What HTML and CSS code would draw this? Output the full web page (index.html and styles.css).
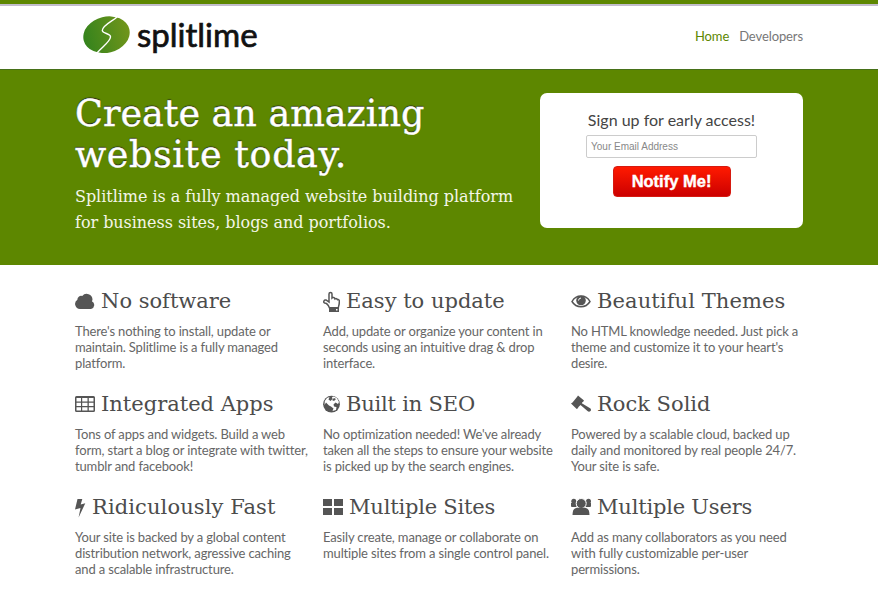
FILE: index.html
```html
<!DOCTYPE html>
<html lang="en">
<head>
    <meta charset="UTF-8">
    <meta name="viewport" content="width=device-width, initial-scale=1.0">
    <title>Splitlime</title>
    <link rel="stylesheet" href="styles.css">
</head>
<body>
    <header class="header">
        <div class="container header-inner">
            <a class="logo" href="#">
                <svg class="logo-mark" width="48" height="38" viewBox="0 0 48 38">
                    <defs>
                        <linearGradient id="lime" x1="0" y1="0" x2="1" y2="0">
                            <stop offset="0" stop-color="#34831d"/>
                            <stop offset="1" stop-color="#71951a"/>
                        </linearGradient>
                    </defs>
                    <ellipse cx="23.500" cy="18.700" rx="23.500" ry="18" transform="rotate(-14 23.500 18.700)" fill="url(#lime)"/>
                    <path d="M34 1C30 5 19.500 9 19.300 14.500C19.500 18 28 17 27.500 21C27 26 19 31 14 37" fill="none" stroke="#fff" stroke-width="1.400"/>
                </svg>
                <span class="logo-text">splitlime</span>
            </a>
            <nav class="nav">
                <a class="active" href="#">Home</a>
                <a href="#">Developers</a>
            </nav>
        </div>
    </header>

    <section class="hero">
        <div class="container hero-inner">
            <div class="intro">
                <h1>Create an amazing<br><span class="h1-second">website today.</span></h1>
                <p class="tagline">Splitlime is a fully managed website building platform<br>for business sites, blogs and portfolios.</p>
            </div>
            <form class="signup">
                <label for="email">Sign up for early access!</label>
                <input type="email" id="email" placeholder="Your Email Address">
                <button type="button">Notify Me!</button>
            </form>
        </div>
    </section>

    <main class="container features">
        <div class="feature">
            <h3>
                <svg width="20" height="22" viewBox="0 0 20 22"><path d="M5 19a5 5 0 0 1-2.600-9.200A3.700 3.700 0 0 1 7.200 6A5.800 5.800 0 0 1 17.500 9.500C17.400 10.300 17.200 10.900 16.900 11.300A4.100 4.100 0 0 1 16 19z"/></svg>
                <span>No software</span>
            </h3>
            <p>There's nothing to install, update or<br>maintain. Splitlime is a fully managed<br>platform.</p>
        </div>
        <div class="feature">
            <h3>
                <svg width="17" height="22" viewBox="0 0 17 22"><path class="outline" d="M6.500 18C5.500 15.500 3.500 13 1.500 13C0 12 1 9.500 3 10L6 12V4C6 2 9 2 9 4V8C10 7 11.500 7.500 12 9C13 8.200 14 8.700 14.500 9.700C16 9.200 16.500 10.500 16.300 12C16.300 15 15.500 16 15.300 18z"/><path d="M6 17h10v5H6z"/><path fill="#fff" d="M13 19h1.500v1.500H13z"/></svg>
                <span>Easy to update</span>
            </h3>
            <p>Add, update or organize your content in<br>seconds using an intuitive drag &amp; drop<br>interface.</p>
        </div>
        <div class="feature">
            <h3>
                <svg width="20" height="22" viewBox="0 0 20 22"><path class="outline" d="M1 11.500C5.200 4.200 14.800 4.200 19 11.500C14.800 18.500 5.200 18.500 1 11.500z"/><circle cx="10" cy="10.500" r="4.800"/><path class="cut" d="M7.500 10.500A2.700 2.700 0 0 1 10 8"/></svg>
                <span class="wide">Beautiful Themes</span>
            </h3>
            <p>No HTML knowledge needed. Just pick a<br>theme and customize it to your heart's<br>desire.</p>
        </div>
        <div class="feature">
            <h3>
                <svg width="20" height="22" viewBox="0 0 20 22"><path fill-rule="evenodd" d="M1.500 3h17Q20 3 20 4.500v13Q20 19 18.500 19h-17Q0 19 0 17.500v-13Q0 3 1.500 3zM1.500 5v3.500h4.500V5zM7.200 5v3.500h5.300V5zM13.800 5v3.500h4.700V5zM1.500 9.700v3.300h4.500v-3.300zM7.200 9.700v3.300h5.300v-3.300zM13.800 9.700v3.300h4.700v-3.300zM1.500 14.200v3.300h4.500v-3.300zM7.200 14.200v3.300h5.300v-3.300zM13.800 14.200v3.300h4.700v-3.300z"/></svg>
                <span>Integrated Apps</span>
            </h3>
            <p>Tons of apps and widgets. Build a web<br>form, start a blog or integrate with twitter,<br>tumblr and facebook!</p>
        </div>
        <div class="feature">
            <h3>
                <svg width="17" height="22" viewBox="0 0 17 22"><circle cx="8.500" cy="11.200" r="8.400"/><path fill="#fff" d="M9 4L11 3.500L14 5.200L16 9L15 11L12.500 9.500L10.500 11.500L11 13.500L13.500 14L13 17L9.500 18L10.500 15.500L8 13.500L6 12.500L3 9.500L1.500 12L1.800 8L4 5L6.500 4L5.500 6.500L7.500 8L9.500 6z"/><path d="M11 5l2 1-2 2-2-1zM12 12h2l1 1-2 1z"/></svg>
                <span class="narrow">Built in SEO</span>
            </h3>
            <p>No optimization needed! We've already<br>taken all the steps to ensure your website<br>is picked up by the search engines.</p>
        </div>
        <div class="feature">
            <h3>
                <svg width="20" height="22" viewBox="0 0 20 22"><path d="M7 2.500L13 7.500L12 9L11.500 9L10.800 10.200L19.500 15.500Q20.500 17 19.500 18Q18 19.500 16.500 18L9.500 12L7.200 14.300V15L5.700 16L0 10.500L1.500 9.500L6 4z"/></svg>
                <span>Rock Solid</span>
            </h3>
            <p>Powered by a scalable cloud, backed up<br>daily and monitored by real people 24/7.<br>Your site is safe.</p>
        </div>
        <div class="feature">
            <h3>
                <svg width="11" height="22" viewBox="0 0 11 22"><path d="M2.500 3H7.300L5.700 8.500L10.300 7.200L3.600 21.500L5.500 12L0 13.500z"/></svg>
                <span class="wide">Ridiculously Fast</span>
            </h3>
            <p>Your site is backed by a global content<br>distribution network, agressive caching<br>and a scalable infrastructure.</p>
        </div>
        <div class="feature">
            <h3>
                <svg width="20" height="22" viewBox="0 0 20 22"><path d="M0 3h9v7H0zM11 3h9v7h-9zM0 12h9v7H0zM11 12h9v7h-9z"/></svg>
                <span class="narrow">Multiple Sites</span>
            </h3>
            <p>Easily create, manage or collaborate on<br>multiple sites from a single control panel.</p>
        </div>
        <div class="feature">
            <h3>
                <svg width="20" height="22" viewBox="0 0 20 22"><circle cx="2.800" cy="5.200" r="2.500"/><circle cx="17.500" cy="5.200" r="2.500"/><path d="M0 7h5.500v4H1Q0 11 0 10zM14.500 7H20v3q0 1-1 1h-4.500z"/><circle class="ring" cx="10.200" cy="7.500" r="5"/><path d="M1.500 19Q1.500 12 6 11.700h8Q18.500 12 18.500 19z"/></svg>
                <span class="narrow">Multiple Users</span>
            </h3>
            <p>Add as many collaborators as you need<br>with fully customizable per-user<br>permissions.</p>
        </div>
    </main>
</body>
</html>
```
FILE: styles.css
```css
* {
    box-sizing: border-box;
}

body {
    margin: 0;
    background-color: #fff;
    font-family: Lato, sans-serif;
    font-variant-ligatures: none;
    color: #666;
}

a {
    color: inherit;
    text-decoration: none;
}

.container {
    width: 728px;
    margin: 0 auto;
}

.header {
    height: 70px;
    border-top: 4px solid #5d8700;
    border-bottom: 1px solid #467018;
    box-shadow: inset 0 2px 0 #c2bdcc;
}

.header-inner {
    display: flex;
    justify-content: space-between;
}

.logo {
    display: flex;
    padding: 12px 0 0 8px;
}

.logo-mark {
    flex: none;
}

.logo-text {
    margin-left: 6px;
    font-size: 33px;
    line-height: 37px;
    color: #111;
    -webkit-text-stroke: 0.7px #111;
}

.nav {
    display: flex;
    gap: 10px;
    padding-top: 23px;
    font-size: 13px;
    line-height: 18px;
    letter-spacing: -0.1px;
    color: #777;
}

.nav .active {
    color: #5d8700;
}

.hero {
    height: 195px;
    background-color: #5d8700;
}

.hero-inner {
    display: flex;
    justify-content: space-between;
    padding-top: 23px;
}

h1, h3, .tagline {
    margin: 0;
    font-family: "DejaVu Serif", serif;
    font-weight: normal;
    white-space: nowrap;
}

.intro {
    width: 440px;
}

h1 {
    font-size: 36.500px;
    line-height: 41px;
    color: #fff;
    text-shadow: 0 -1px 1px #222;
    -webkit-text-stroke: 0.4px #fff;
}

.h1-second {
    letter-spacing: 0.6px;
}

.tagline {
    margin-top: 9px;
    font-size: 16px;
    line-height: 26px;
    letter-spacing: -0.040px;
    color: #f4f6e8;
}

.signup {
    display: flex;
    flex-direction: column;
    align-items: center;
    width: 263px;
    height: 135px;
    padding-top: 16px;
    background-color: #fff;
    border-radius: 7px;
}

.signup label {
    font-size: 16px;
    line-height: 22px;
    color: #444;
}

.signup input {
    width: 171px;
    height: 23px;
    margin-top: 4px;
    padding: 0 4px;
    border: 1px solid #ccc;
    border-radius: 2px;
    font-family: "Liberation Sans", sans-serif;
    font-size: 10px;
}

.signup input::placeholder {
    color: #888;
}

.signup button {
    width: 118px;
    height: 31px;
    margin-top: 8px;
    padding: 0;
    border: 1px solid #d61a10;
    border-radius: 4px;
    background: linear-gradient(#ff1a00, #cc0000);
    font-family: "Liberation Sans", sans-serif;
    font-size: 16.500px;
    font-weight: bold;
    color: #fff;
    -webkit-text-stroke: 0.4px #fff;
}

.features {
    display: grid;
    grid-template-columns: repeat(3, 232px);
    grid-auto-rows: 103px;
    column-gap: 16px;
    padding-top: 23px;
}

h3 {
    display: flex;
    align-items: center;
    gap: 6px;
    height: 26px;
    font-size: 21px;
    line-height: 26px;
    color: #4c4c4c;
}

h3 .wide {
    letter-spacing: 0.1px;
}

h3 .narrow {
    letter-spacing: -0.2px;
}

h3 svg {
    flex: none;
    fill: #555;
}

h3 .outline {
    fill: none;
    stroke: #555;
    stroke-width: 1.500;
}

h3 .cut {
    fill: none;
    stroke: #fff;
}

h3 .ring {
    stroke: #fff;
}

.feature p {
    margin: 9px 0 0;
    font-size: 13px;
    line-height: 16px;
    letter-spacing: -0.15px;
    white-space: nowrap;
}
```
